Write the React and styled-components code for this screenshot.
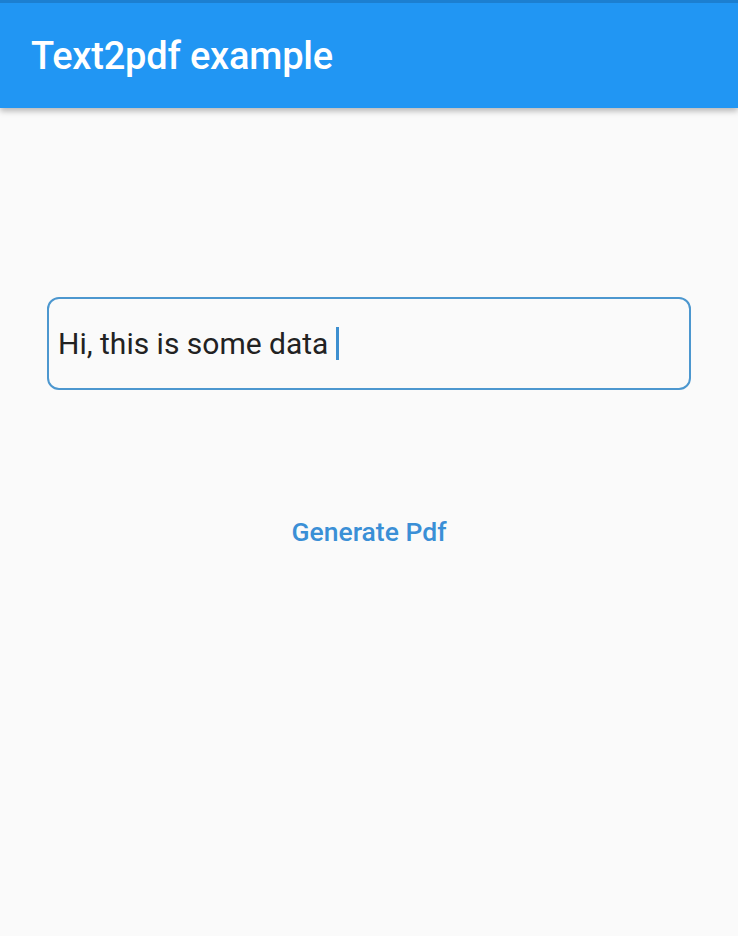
import styled, { createGlobalStyle } from "styled-components";

const GlobalStyle = createGlobalStyle`
    html, body {
        margin: 0;
        padding: 0;
        background: #fafafa;
        font-family: Roboto, "Noto Sans", sans-serif;
    }
`

const App = () => {
    return <>
    <GlobalStyle />
    <Page>
        <AppBar>
            <Title>Text2pdf example</Title>
        </AppBar>
        <Body>
            <Field>
                <FieldText>Hi, this is some data</FieldText>
                <Caret />
            </Field>
            <TextButton type="button">Generate Pdf</TextButton>
        </Body>
    </Page>
    </>
}

export default App

const Page = styled.div`
    width: 738px;
    height: 936px;
    background: #fafafa;
    display: flex;
    flex-direction: column;
    overflow: hidden;
`

const AppBar = styled.header`
    height: 105px;
    background: #2196f3;
    border-top: 3px solid #1c7fd0;
    display: flex;
    align-items: center;
    padding-left: 31px;
    box-shadow: 0 3px 6px rgba(0, 0, 0, 0.28);
    position: relative;
    z-index: 2;
`

const Title = styled.h1`
    margin: 0;
    color: #ffffff;
    font-size: 38px;
    font-weight: 500;
    letter-spacing: -0.2px;
`

const Body = styled.main`
    display: flex;
    flex-direction: column;
    align-items: center;
    padding-top: 189px;
`

const Field = styled.div`
    box-sizing: border-box;
    width: 644px;
    height: 93px;
    border: 2px solid #4c97cf;
    border-radius: 12px;
    display: flex;
    align-items: center;
    padding-left: 9px;
    gap: 8px;
`

const FieldText = styled.span`
    font-size: 30px;
    color: #222222;
`

const Caret = styled.span`
    width: 3px;
    height: 33px;
    background: #3d8fd0;
`

const TextButton = styled.button`
    margin-top: 126px;
    border: none;
    background: none;
    padding: 0;
    font-family: Roboto, "Noto Sans", sans-serif;
    font-size: 26.5px;
    font-weight: 500;
    color: #3a8fd6;
    cursor: pointer;
`
